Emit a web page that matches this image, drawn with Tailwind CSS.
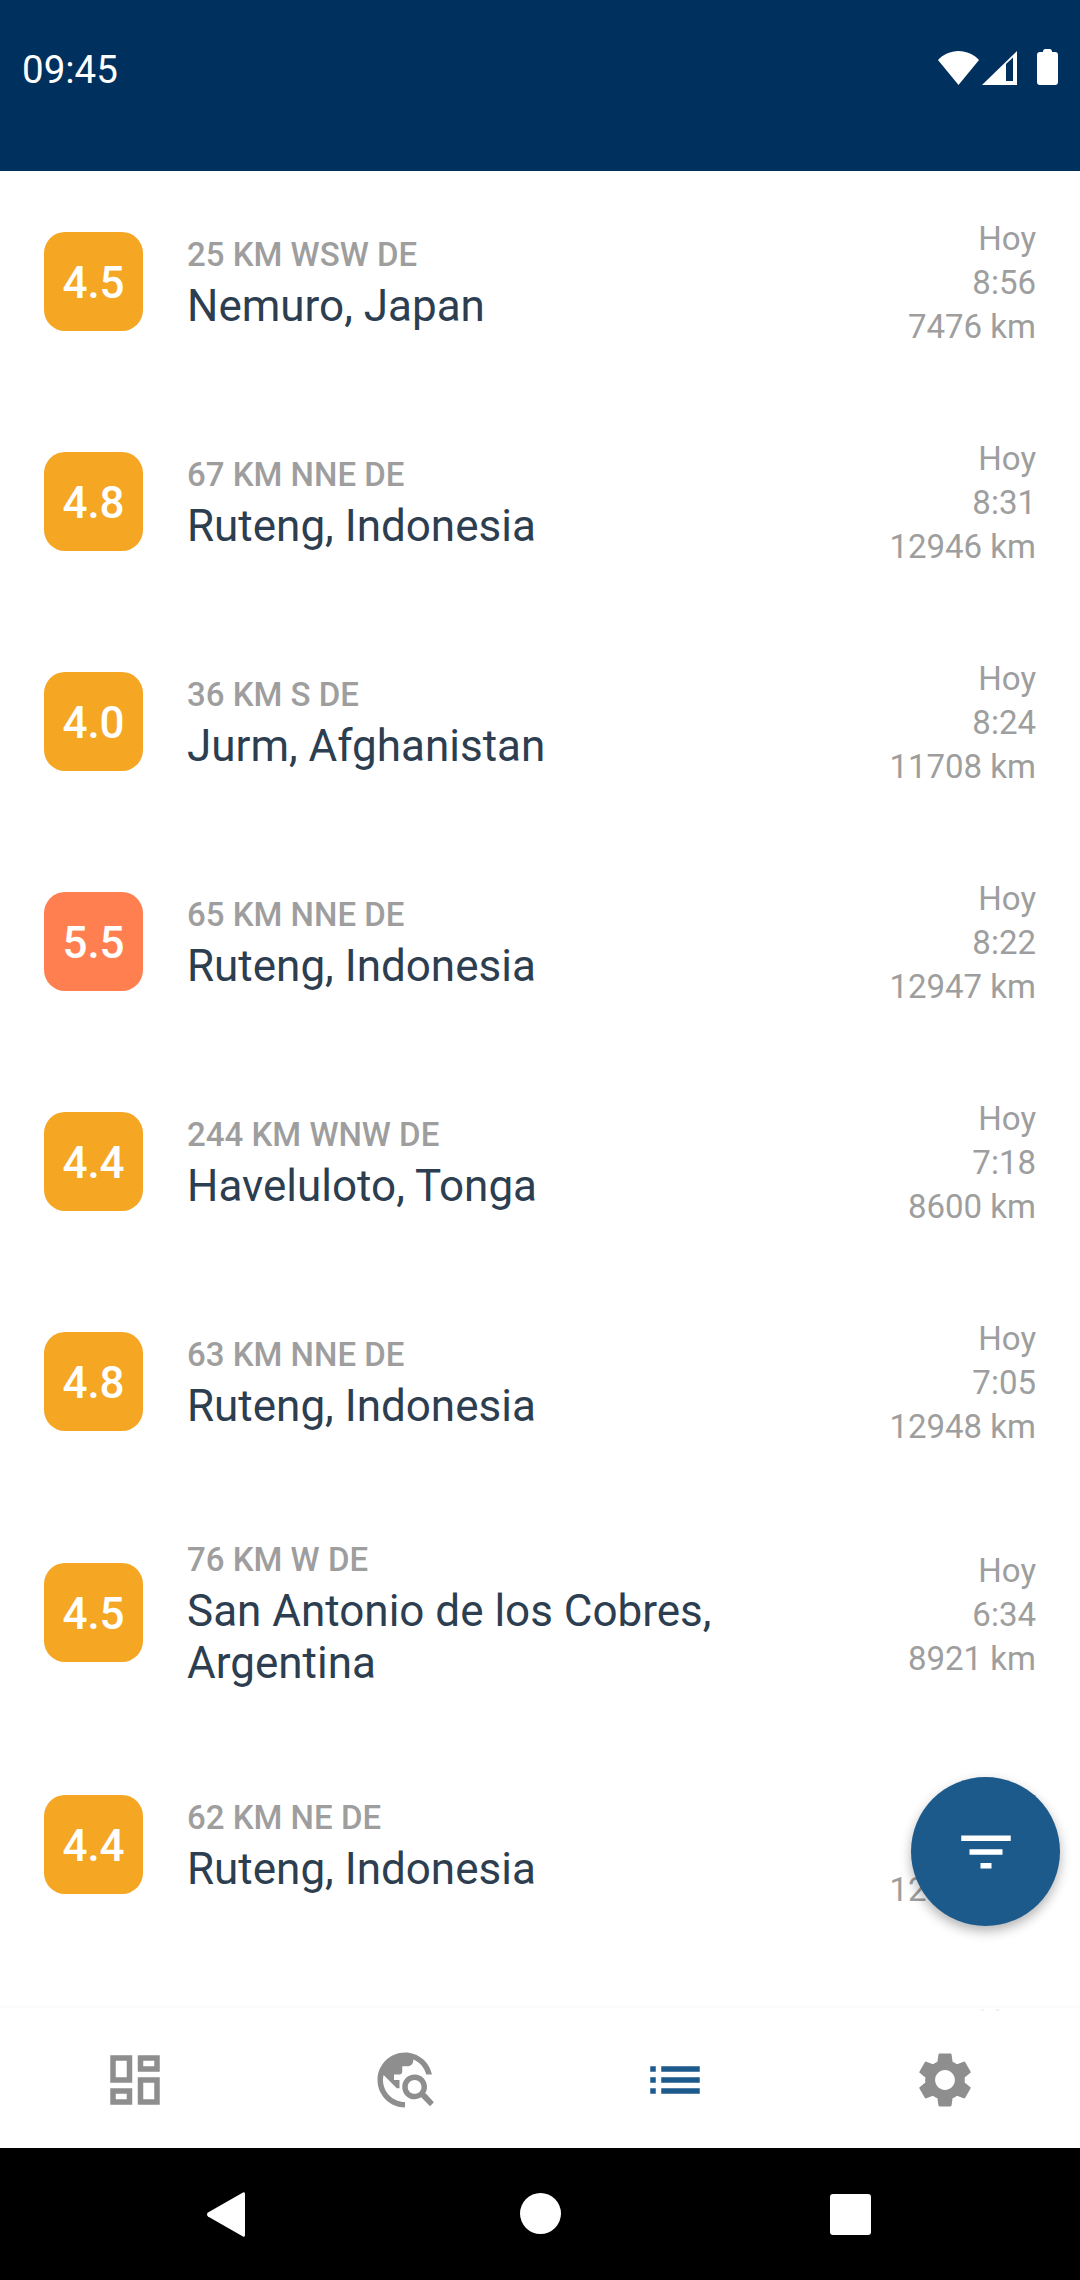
<!DOCTYPE html>
<html lang="es">
  <head>
    <meta charset="UTF-8" />
    <meta name="viewport" content="width=device-width, initial-scale=1.0" />
    <title>Sismos</title>
    <script src="https://cdn.jsdelivr.net/npm/@tailwindcss/browser@4"></script>
  </head>
  <body class="bg-white font-['Roboto',sans-serif]">
    <div class="relative flex flex-col w-[1080px] h-[2280px] overflow-hidden bg-white">
      <!-- status bar -->
      <header class="flex justify-between h-[171px] shrink-0 bg-[#00305d] pl-[22px] pr-[22px] pt-[47px] text-white">
        <span class="text-[38.500px] leading-[45px] h-[45px]">09:45</span>
        <div class="flex items-start gap-[3px] pt-[2px]">
          <svg class="w-[41px] h-[34px] mt-[2px]" viewBox="0 0 41 34" fill="#fff">
            <path d="M0 9C5 3.500 12.500 0 20.500 0S36 3.500 41 9L20.500 34z" />
          </svg>
          <svg class="w-[35px] h-[34px] mt-[2px]" viewBox="0 0 35 34">
            <path fill="#fff" d="M35 0v34H0z" />
            <path fill="#00305d" d="M24 30V13l7-6.500V30z" />
          </svg>
          <svg class="w-[21px] h-[36px] ml-[17px]" viewBox="0 0 21 36" fill="#fff">
            <path d="M6 2.500Q6 0 8 0h5q2 0 2 2.500V3h3q3 0 3 3v27q0 3-3 3H3q-3 0-3-3V6q0-3 3-3h3z" />
          </svg>
        </div>
      </header>

      <!-- quake list -->
      <main class="h-[1840px] shrink-0 overflow-hidden">
        <div class="flex items-center pt-[46px] pb-[42px] px-[44px]">
          <div class="flex items-center justify-center w-[99px] h-[99px] mb-[4px] pt-[3px] shrink-0 rounded-[21px] bg-[#f5a623] text-white text-[44px] font-medium">4.5</div>
          <div class="flex-1 ml-[44px] pt-[4px] pb-[3px]">
            <p class="text-[33px] leading-[37px] font-medium text-[#9e9e9e] mb-[7px]">25 KM WSW DE</p>
            <p class="text-[44px] leading-[52px] text-[#2c3e50] max-w-[600px]">Nemuro, Japan</p>
          </div>
          <div class="text-right text-[33px] leading-[44px] text-[#9e9e9e]"><p>Hoy</p><p>8:56</p><p>7476 km</p></div>
        </div>
        <div class="flex items-center pt-[46px] pb-[42px] px-[44px]">
          <div class="flex items-center justify-center w-[99px] h-[99px] mb-[4px] pt-[3px] shrink-0 rounded-[21px] bg-[#f5a623] text-white text-[44px] font-medium">4.8</div>
          <div class="flex-1 ml-[44px] pt-[4px] pb-[3px]">
            <p class="text-[33px] leading-[37px] font-medium text-[#9e9e9e] mb-[7px]">67 KM NNE DE</p>
            <p class="text-[44px] leading-[52px] text-[#2c3e50] max-w-[600px]">Ruteng, Indonesia</p>
          </div>
          <div class="text-right text-[33px] leading-[44px] text-[#9e9e9e]"><p>Hoy</p><p>8:31</p><p>12946 km</p></div>
        </div>
        <div class="flex items-center pt-[46px] pb-[42px] px-[44px]">
          <div class="flex items-center justify-center w-[99px] h-[99px] mb-[4px] pt-[3px] shrink-0 rounded-[21px] bg-[#f5a623] text-white text-[44px] font-medium">4.0</div>
          <div class="flex-1 ml-[44px] pt-[4px] pb-[3px]">
            <p class="text-[33px] leading-[37px] font-medium text-[#9e9e9e] mb-[7px]">36 KM S DE</p>
            <p class="text-[44px] leading-[52px] text-[#2c3e50] max-w-[600px]">Jurm, Afghanistan</p>
          </div>
          <div class="text-right text-[33px] leading-[44px] text-[#9e9e9e]"><p>Hoy</p><p>8:24</p><p>11708 km</p></div>
        </div>
        <div class="flex items-center pt-[46px] pb-[42px] px-[44px]">
          <div class="flex items-center justify-center w-[99px] h-[99px] mb-[4px] pt-[3px] shrink-0 rounded-[21px] bg-[#ff7f50] text-white text-[44px] font-medium">5.5</div>
          <div class="flex-1 ml-[44px] pt-[4px] pb-[3px]">
            <p class="text-[33px] leading-[37px] font-medium text-[#9e9e9e] mb-[7px]">65 KM NNE DE</p>
            <p class="text-[44px] leading-[52px] text-[#2c3e50] max-w-[600px]">Ruteng, Indonesia</p>
          </div>
          <div class="text-right text-[33px] leading-[44px] text-[#9e9e9e]"><p>Hoy</p><p>8:22</p><p>12947 km</p></div>
        </div>
        <div class="flex items-center pt-[46px] pb-[42px] px-[44px]">
          <div class="flex items-center justify-center w-[99px] h-[99px] mb-[4px] pt-[3px] shrink-0 rounded-[21px] bg-[#f5a623] text-white text-[44px] font-medium">4.4</div>
          <div class="flex-1 ml-[44px] pt-[4px] pb-[3px]">
            <p class="text-[33px] leading-[37px] font-medium text-[#9e9e9e] mb-[7px]">244 KM WNW DE</p>
            <p class="text-[44px] leading-[52px] text-[#2c3e50] max-w-[600px]">Haveluloto, Tonga</p>
          </div>
          <div class="text-right text-[33px] leading-[44px] text-[#9e9e9e]"><p>Hoy</p><p>7:18</p><p>8600 km</p></div>
        </div>
        <div class="flex items-center pt-[46px] pb-[42px] px-[44px]">
          <div class="flex items-center justify-center w-[99px] h-[99px] mb-[4px] pt-[3px] shrink-0 rounded-[21px] bg-[#f5a623] text-white text-[44px] font-medium">4.8</div>
          <div class="flex-1 ml-[44px] pt-[4px] pb-[3px]">
            <p class="text-[33px] leading-[37px] font-medium text-[#9e9e9e] mb-[7px]">63 KM NNE DE</p>
            <p class="text-[44px] leading-[52px] text-[#2c3e50] max-w-[600px]">Ruteng, Indonesia</p>
          </div>
          <div class="text-right text-[33px] leading-[44px] text-[#9e9e9e]"><p>Hoy</p><p>7:05</p><p>12948 km</p></div>
        </div>
        <div class="flex items-center pt-[46px] pb-[42px] px-[44px]">
          <div class="flex items-center justify-center w-[99px] h-[99px] mb-[4px] pt-[3px] shrink-0 rounded-[21px] bg-[#f5a623] text-white text-[44px] font-medium">4.5</div>
          <div class="flex-1 ml-[44px] pt-[4px] pb-[3px]">
            <p class="text-[33px] leading-[37px] font-medium text-[#9e9e9e] mb-[7px]">76 KM W DE</p>
            <p class="text-[44px] leading-[52px] text-[#2c3e50] max-w-[600px]">San Antonio de los Cobres, Argentina</p>
          </div>
          <div class="text-right text-[33px] leading-[44px] text-[#9e9e9e]"><p>Hoy</p><p>6:34</p><p>8921 km</p></div>
        </div>
        <div class="flex items-center pt-[46px] pb-[42px] px-[44px]">
          <div class="flex items-center justify-center w-[99px] h-[99px] mb-[4px] pt-[3px] shrink-0 rounded-[21px] bg-[#f5a623] text-white text-[44px] font-medium">4.4</div>
          <div class="flex-1 ml-[44px] pt-[4px] pb-[3px]">
            <p class="text-[33px] leading-[37px] font-medium text-[#9e9e9e] mb-[7px]">62 KM NE DE</p>
            <p class="text-[44px] leading-[52px] text-[#2c3e50] max-w-[600px]">Ruteng, Indonesia</p>
          </div>
          <div class="text-right text-[33px] leading-[44px] text-[#9e9e9e]"><p>Hoy</p><p>6:20</p><p>12949 km</p></div>
        </div>
        <div class="pt-[46px] px-[44px] text-right text-[33px] leading-[44px] text-[#9e9e9e]"><p>Hoy</p></div>
      </main>

      <!-- filter button -->
      <button class="absolute left-[911px] top-[1777px] flex items-center justify-center w-[149px] h-[149px] rounded-full bg-[#1c5a8c] shadow-[0_5px_12px_rgba(0,0,0,0.3)]">
        <svg class="w-[66px] h-[66px]" viewBox="0 0 24 24" fill="#fff"><path d="M10 18h4v-2h-4v2zM3 6v2h18V6H3zm3 7h12v-2H6v2z" /></svg>
      </button>

      <!-- bottom nav -->
      <nav class="grid grid-cols-4 items-center justify-items-center h-[140px] -mt-[3px] pt-[3px] shrink-0 bg-white/85 shadow-[0_-2px_5px_rgba(0,0,0,0.025)]">
        <svg class="w-[66px] h-[66px]" viewBox="0 0 24 24" fill="#8e8e8e"><path d="M19 5v2h-4V5h4M9 5v6H5V5h4m10 8v6h-4v-6h4M9 17v2H5v-2h4M21 3h-8v6h8V3zM11 3H3v10h8V3zm10 8h-8v10h8V11zm-10 4H3v6h8v-6z" /></svg>
        <svg class="w-[66px] h-[66px]" viewBox="0 0 24 24" fill="#8e8e8e"><path d="M19.300 16.900c.4-.7.7-1.500.7-2.400 0-2.500-2-4.500-4.500-4.500S11 12 11 14.500s2 4.500 4.500 4.500c.9 0 1.700-.3 2.400-.7l3.200 3.200 1.400-1.400-2.900-3.200zM15.500 17c-1.400 0-2.500-1.100-2.500-2.500s1.100-2.500 2.500-2.500 2.500 1.100 2.500 2.500-1.100 2.500-2.500 2.500zM12 20v2C6.480 22 2 17.520 2 12S6.480 2 12 2c4.840 0 8.870 3.440 9.800 8h-2.070c-.64-2.460-2.400-4.470-4.730-5.410V5c0 1.100-.9 2-2 2h-2v2c0 .55-.45 1-1 1H8v2h2v3H9l-4.790-4.790C4.080 10.790 4 11.380 4 12c0 4.410 3.590 8 8 8z" /></svg>
        <svg class="w-[66px] h-[66px]" viewBox="0 0 24 24" fill="#1c5a8c"><path d="M3 13h2v-2H3v2zm0 4h2v-2H3v2zm0-8h2V7H3v2zm4 4h14v-2H7v2zm0 4h14v-2H7v2zM7 7v2h14V7H7z" /></svg>
        <svg class="w-[66px] h-[66px]" viewBox="0 0 24 24" fill="#8e8e8e"><path d="M19.140 12.940c.04-.3.06-.61.06-.94 0-.32-.02-.64-.07-.94l2.030-1.580c.18-.14.23-.41.12-.61l-1.920-3.320c-.12-.22-.37-.29-.59-.22l-2.390.96c-.5-.38-1.030-.7-1.620-.94l-.36-2.540c-.04-.24-.24-.41-.48-.41h-3.840c-.24 0-.43.17-.47.41l-.36 2.540c-.59.24-1.130.57-1.620.94l-2.390-.96c-.22-.08-.47 0-.59.22L2.740 8.870c-.12.21-.08.47.12.61l2.030 1.580c-.05.3-.09.63-.09.94s.02.64.07.94l-2.030 1.580c-.18.14-.23.41-.12.61l1.920 3.320c.12.22.37.29.59.22l2.390-.96c.5.38 1.030.7 1.620.94l.36 2.540c.05.24.24.41.48.41h3.840c.24 0 .44-.17.47-.41l.36-2.540c.59-.24 1.130-.56 1.620-.94l2.390.96c.22.08.47 0 .59-.22l1.920-3.320c.12-.22.07-.47-.12-.61l-2.010-1.580zM12 15.600c-1.980 0-3.600-1.620-3.600-3.600s1.620-3.600 3.600-3.600 3.600 1.620 3.600 3.600-1.620 3.600-3.600 3.600z" /></svg>
      </nav>

      <!-- android nav -->
      <footer class="flex-1 bg-black relative">
        <svg class="absolute left-[205px] top-[43px] w-[41px] h-[47px]" viewBox="0 0 41 47" fill="#fff"><path d="M38 1.500Q40 .5 40 3v41q0 2.500-2 1.500L3 25.500q-2-2 0-4z" /></svg>
        <div class="absolute left-[520px] top-[45px] w-[41px] h-[41px] rounded-full bg-white"></div>
        <div class="absolute left-[830px] top-[46px] w-[41px] h-[41px] rounded-[3px] bg-white"></div>
      </footer>
    </div>
  </body>
</html>
